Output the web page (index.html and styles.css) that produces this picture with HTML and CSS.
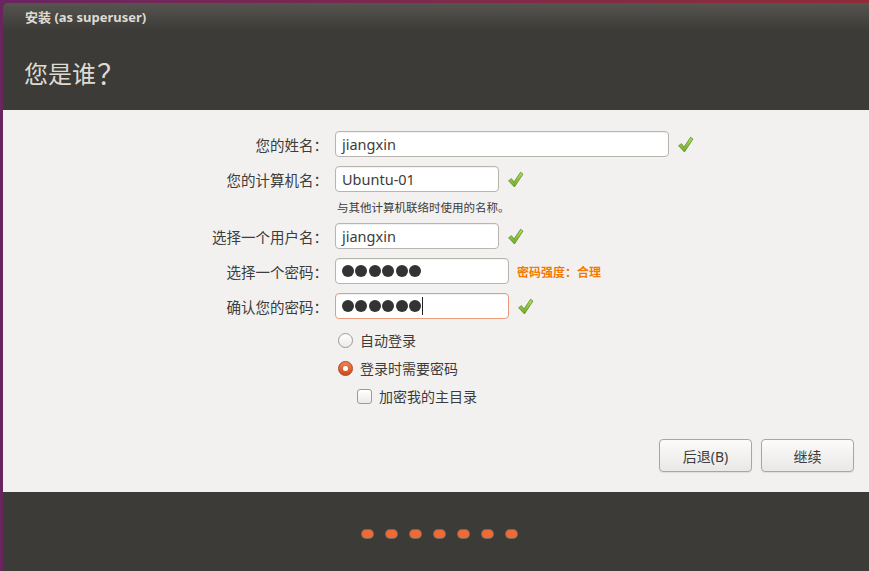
FILE: index.html
```html
<!DOCTYPE html>
<html lang="zh-CN">
<head>
    <meta charset="UTF-8">
    <title>安装 (as superuser)</title>
    <link rel="stylesheet" href="styles.css">
</head>
<body>
    <svg width="0" height="0" class="defs">
        <defs>
            <linearGradient id="ok-grad" x1="0" y1="0" x2="0" y2="1">
                <stop offset="0" stop-color="#b5e061"/>
                <stop offset="1" stop-color="#6ea82a"/>
            </linearGradient>
        </defs>
    </svg>
    <div class="desktop">
        <div class="window">
            <header class="win-head">
                <div class="win-title">安装 (as superuser)</div>
                <h1 class="page-title">您是谁<span class="fw">？</span></h1>
            </header>

            <main class="win-body">
                <div class="form">
                    <div class="row">
                        <span class="label">您的姓名<span class="fw">：</span></span>
                        <div class="field-wrap">
                            <div class="field w-long">jiangxin</div>
                            <svg class="check" viewBox="0 0 16 16"><path d="M1.5 9.2 L4.2 7.2 L6.6 10.4 L12.8 1.2 L15 2.9 L7 15 Z"/></svg>
                        </div>
                    </div>
                    <div class="row no-gap">
                        <span class="label">您的计算机名<span class="fw">：</span></span>
                        <div class="field-wrap">
                            <div class="field w-short">Ubuntu-01</div>
                            <svg class="check" viewBox="0 0 16 16"><path d="M1.5 9.2 L4.2 7.2 L6.6 10.4 L12.8 1.2 L15 2.9 L7 15 Z"/></svg>
                        </div>
                    </div>
                    <div class="hint">与其他计算机联络时使用的名称。</div>
                    <div class="row">
                        <span class="label">选择一个用户名<span class="fw">：</span></span>
                        <div class="field-wrap">
                            <div class="field w-short">jiangxin</div>
                            <svg class="check" viewBox="0 0 16 16"><path d="M1.5 9.2 L4.2 7.2 L6.6 10.4 L12.8 1.2 L15 2.9 L7 15 Z"/></svg>
                        </div>
                    </div>
                    <div class="row">
                        <span class="label">选择一个密码<span class="fw">：</span></span>
                        <div class="field-wrap">
                            <div class="field w-mid">
                                <i class="dot"></i><i class="dot"></i><i class="dot"></i><i class="dot"></i><i class="dot"></i><i class="dot"></i>
                            </div>
                            <span class="strength">密码强度<span class="fw">：</span>合理</span>
                        </div>
                    </div>
                    <div class="row">
                        <span class="label">确认您的密码<span class="fw">：</span></span>
                        <div class="field-wrap">
                            <div class="field w-mid focused">
                                <i class="dot"></i><i class="dot"></i><i class="dot"></i><i class="dot"></i><i class="dot"></i><i class="dot"></i><span class="caret"></span>
                            </div>
                            <svg class="check" viewBox="0 0 16 16"><path d="M1.5 9.2 L4.2 7.2 L6.6 10.4 L12.8 1.2 L15 2.9 L7 15 Z"/></svg>
                        </div>
                    </div>

                    <div class="options">
                        <div class="option">
                            <span class="radio"></span>
                            <span>自动登录</span>
                        </div>
                        <div class="option">
                            <span class="radio on"></span>
                            <span>登录时需要密码</span>
                        </div>
                        <div class="option sub">
                            <span class="checkbox"></span>
                            <span>加密我的主目录</span>
                        </div>
                    </div>
                </div>

                <div class="actions">
                    <button class="btn">后退(B)</button>
                    <button class="btn">继续</button>
                </div>
            </main>

            <footer class="win-foot">
                <div class="steps">
                    <span class="step"></span>
                    <span class="step"></span>
                    <span class="step"></span>
                    <span class="step"></span>
                    <span class="step"></span>
                    <span class="step"></span>
                    <span class="step"></span>
                </div>
            </footer>
        </div>
    </div>
</body>
</html>
```

FILE: styles.css
```css
:root {
    --dark: #3c3b37;
    --light-bg: #f2f1f0;
    --text-color: #3c3c3c;
    --head-text: #dfdbd2;
    --orange: #f57900;
    --cjk: 'Noto Sans CJK SC', sans-serif;
}

* {
    box-sizing: border-box;
}

body {
    margin: 0;
    font-family: 'Noto Sans', 'Noto Sans CJK SC', sans-serif;
    color: var(--text-color);
    overflow: hidden;
}

.defs {
    position: absolute;
}

/* full-width punctuation, glyph centred in a 1em box */
.fw {
    display: inline-block;
    width: 1em;
    text-align: center;
}

.desktop {
    height: 571px;
    padding: 3px 0 0 3px;
    background: linear-gradient(90deg, #6a2560, #7d2a4c 50%, #8e2c37);
}

.window {
    height: 568px;
    display: flex;
    flex-direction: column;
    border-top-left-radius: 5px;
    overflow: hidden;
    background: var(--dark);
}

/* header */
.win-head {
    height: 107px;
    padding: 5px 0 0 22px;
    background: linear-gradient(180deg, #56544f 0, #3c3b37 28px);
    color: var(--head-text);
}

.win-title {
    font-size: 13px;
    font-weight: bold;
    line-height: 18px;
}

.page-title {
    margin: 32px 0 0 -1px;
    font-family: var(--cjk);
    font-size: 24px;
    font-weight: normal;
    line-height: 30px;
}

.page-title .fw {
    font-size: 28px;
    width: 30px;
    line-height: 30px;
    vertical-align: top;
}

/* body */
.win-body {
    height: 382px;
    display: flex;
    flex-direction: column;
    background: var(--light-bg);
    padding-top: 21px;
}

.row {
    display: grid;
    grid-template-columns: 322px 1fr;
    column-gap: 10px;
    align-items: center;
    margin-bottom: 9px;
}

.row.no-gap {
    margin-bottom: 0;
}

.label {
    text-align: right;
    font-family: var(--cjk);
    font-size: 14.5px;
    margin-right: -3px;
}

.field-wrap {
    display: flex;
    align-items: center;
}

.field {
    height: 26px;
    display: flex;
    align-items: center;
    padding-left: 6px;
    background: #fff;
    border: 1px solid #b8b5b0;
    border-radius: 4px;
    font-size: 14.5px;
    box-shadow: inset 0 1px 1px rgba(0, 0, 0, 0.06);
}

.field.focused {
    border-color: #eb9a7c;
}

.w-long { width: 334px; }
.w-short { width: 164px; }
.w-mid { width: 174px; }

.check {
    width: 17px;
    height: 17px;
    margin-left: 8px;
    fill: url(#ok-grad);
    stroke: #5f8f23;
    stroke-width: 0.8;
}

.dot {
    display: inline-block;
    width: 12px;
    height: 12px;
    margin-right: 1.4px;
    border-radius: 50%;
    background: #333;
}

.caret {
    display: inline-block;
    width: 1px;
    height: 18px;
    background: #222;
}

.strength {
    margin-left: 8px;
    font-family: var(--cjk);
    font-size: 12px;
    font-weight: bold;
    color: var(--orange);
}

.hint {
    margin: 7px 0 8px 334px;
    font-family: var(--cjk);
    font-size: 11.5px;
    line-height: 16px;
}

.options {
    margin: -2px 0 0 332px;
}

.option {
    height: 28px;
    display: flex;
    align-items: center;
    gap: 7px;
    font-size: 14px;
    padding-left: 3px;
}

.option.sub {
    padding-left: 22px;
}

.radio {
    width: 15px;
    height: 15px;
    border-radius: 50%;
    border: 1px solid #9d9a95;
    background: linear-gradient(180deg, #fff, #eceae7);
    position: relative;
}

.radio.on {
    border-color: #a8421c;
    background: linear-gradient(180deg, #f0854f, #cc4a1d);
}

.radio.on::after {
    content: "";
    position: absolute;
    left: 4px;
    top: 4px;
    width: 5px;
    height: 5px;
    border-radius: 50%;
    background: #fff;
}

.checkbox {
    width: 15px;
    height: 15px;
    border-radius: 3px;
    border: 1px solid #9d9a95;
    background: linear-gradient(180deg, #fff, #eceae7);
}

.actions {
    margin-top: auto;
    display: flex;
    justify-content: flex-end;
    gap: 9px;
    padding: 0 15px 20px 0;
}

.btn {
    width: 93px;
    height: 33px;
    font-family: inherit;
    font-size: 14px;
    color: var(--text-color);
    border: 1px solid #a9a6a1;
    border-radius: 4px;
    background: linear-gradient(180deg, #fbfbfa, #e9e8e6);
    box-shadow: 0 1px 1px rgba(0, 0, 0, 0.08);
}

/* footer */
.win-foot {
    flex: 1;
    padding-top: 38px;
}

.steps {
    display: flex;
    justify-content: center;
    gap: 13px;
    padding-left: 6px;
}

.step {
    width: 11px;
    height: 8px;
    border-radius: 4px;
    background: #ee6b37;
    box-shadow: 0 0 0 1px rgba(150, 140, 130, 0.6);
}
```
